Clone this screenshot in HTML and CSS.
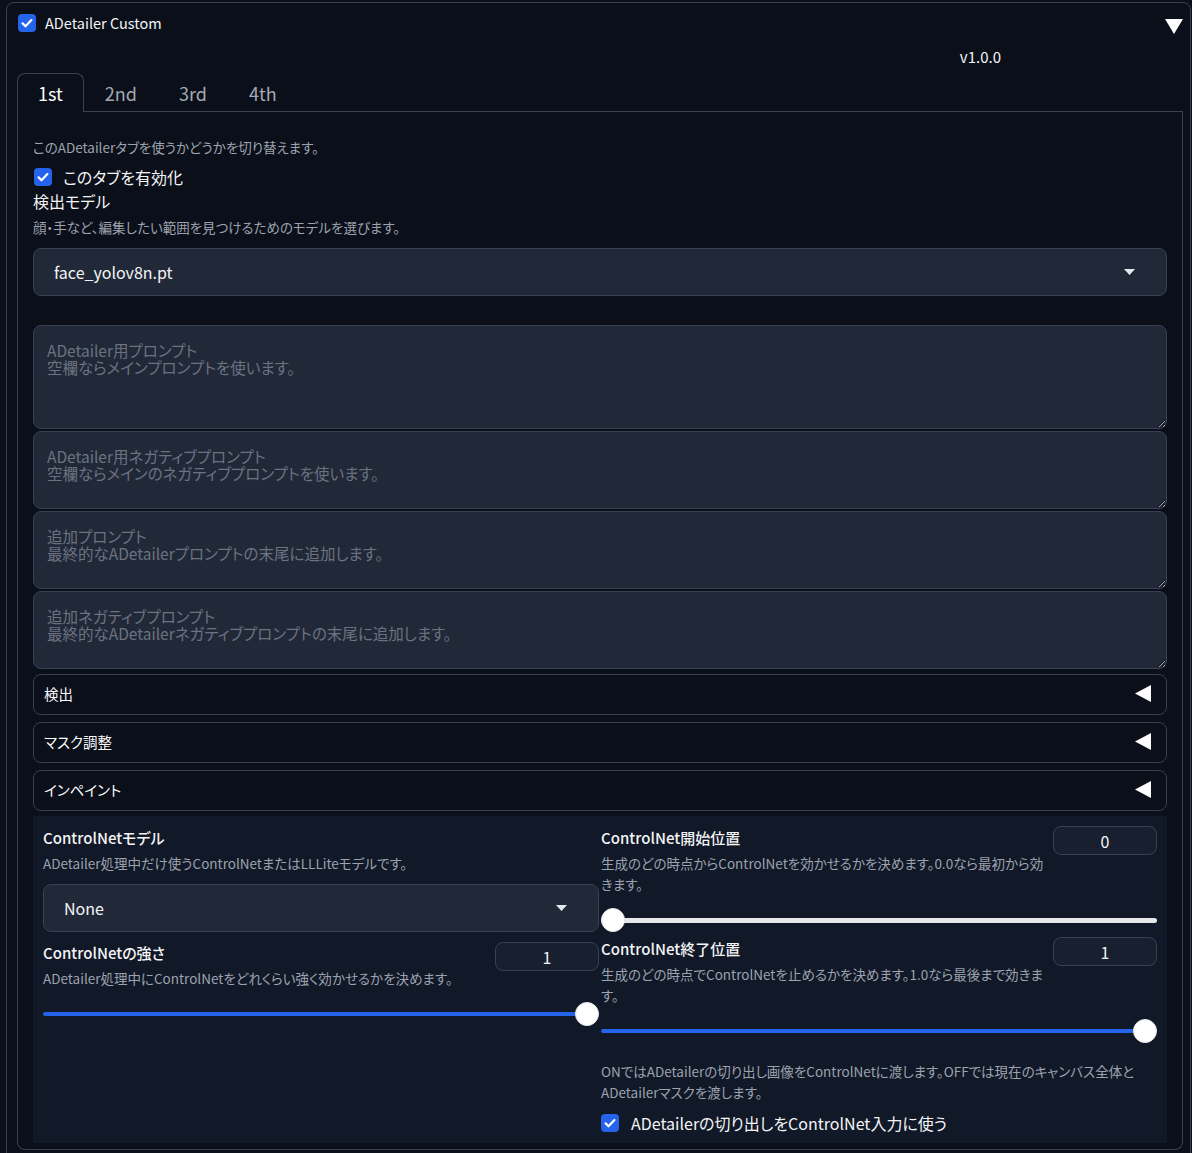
FILE: index.html
```html
<!DOCTYPE html>
<html lang="ja">
<head>
<meta charset="utf-8">
<title>ADetailer Custom</title>
<link rel="stylesheet" href="styles.css">
</head>
<body>
<div class="block">
  <div class="head">
    <label class="check-row head-check">
      <span class="cb"><svg viewBox="0 0 18 18" width="18" height="18"><path d="M4.6 9.4l2.9 2.9 5.9-6.2" fill="none" stroke="#fff" stroke-width="2.2" stroke-linecap="round" stroke-linejoin="round"/></svg></span>
      <span class="head-title">ADetailer Custom</span>
    </label>
    <svg class="tri-down" viewBox="0 0 18 15" width="18" height="15"><polygon points="0,0 18,0 9,15" fill="#fff"/></svg>
  </div>
  <div class="version-row"><span>v1.0.0</span></div>

  <div class="tabs">
    <div class="tab-nav">
      <button class="tab active">1st</button>
      <button class="tab">2nd</button>
      <button class="tab">3rd</button>
      <button class="tab">4th</button>
    </div>
    <div class="tab-panel">
      <p class="desc d-first">このADetailerタブを使うかどうかを切り替えます。</p>
      <label class="check-row enable">
        <span class="cb"><svg viewBox="0 0 18 18" width="18" height="18"><path d="M4.6 9.4l2.9 2.9 5.9-6.2" fill="none" stroke="#fff" stroke-width="2.2" stroke-linecap="round" stroke-linejoin="round"/></svg></span>
        <span class="enable-label">このタブを有効化</span>
      </label>
      <div class="title model-title">検出モデル</div>
      <p class="desc d-model">顔・手など、編集したい範囲を見つけるためのモデルを選びます。</p>
      <div class="select model-select">
        <span>face_yolov8n.pt</span>
        <svg class="caret" viewBox="0 0 11 6" width="11" height="6"><polygon points="0,0 11,0 5.5,6" fill="#e5e7eb"/></svg>
      </div>

      <textarea class="prompt tall" placeholder="ADetailer用プロンプト&#10;空欄ならメインプロンプトを使います。"></textarea>
      <textarea class="prompt" placeholder="ADetailer用ネガティブプロンプト&#10;空欄ならメインのネガティブプロンプトを使います。"></textarea>
      <textarea class="prompt" placeholder="追加プロンプト&#10;最終的なADetailerプロンプトの末尾に追加します。"></textarea>
      <textarea class="prompt" placeholder="追加ネガティブプロンプト&#10;最終的なADetailerネガティブプロンプトの末尾に追加します。"></textarea>

      <div class="acc first"><span>検出</span><svg viewBox="0 0 16 17" width="16" height="17"><polygon points="16,0 16,17 0,8.5" fill="#fff"/></svg></div>
      <div class="acc"><span>マスク調整</span><svg viewBox="0 0 16 17" width="16" height="17"><polygon points="16,0 16,17 0,8.5" fill="#fff"/></svg></div>
      <div class="acc"><span>インペイント</span><svg viewBox="0 0 16 17" width="16" height="17"><polygon points="16,0 16,17 0,8.5" fill="#fff"/></svg></div>

      <div class="cn">
        <div class="col">
          <div class="title cn-title">ControlNetモデル</div>
          <p class="desc cn-desc">ADetailer処理中だけ使うControlNetまたはLLLiteモデルです。</p>
          <div class="select cn-select">
            <span>None</span>
            <svg class="caret" viewBox="0 0 11 6" width="11" height="6"><polygon points="0,0 11,0 5.5,6" fill="#e5e7eb"/></svg>
          </div>
          <div class="slider-block strength">
            <div class="slider-head">
              <div class="slider-info">
                <div class="title">ControlNetの強さ</div>
                <p class="desc cn-desc">ADetailer処理中にControlNetをどれくらい強く効かせるかを決めます。</p>
              </div>
              <input class="num" type="text" value="1">
            </div>
            <input class="range full" type="range" min="0" max="1" step="0.01" value="1">
          </div>
        </div>

        <div class="col">
          <div class="slider-block">
            <div class="slider-head">
              <div class="slider-info">
                <div class="title">ControlNet開始位置</div>
                <p class="desc cn-desc wrap">生成のどの時点からControlNetを効かせるかを決めます。0.0なら最初から効きます。</p>
              </div>
              <input class="num" type="text" value="0">
            </div>
            <input class="range empty" type="range" min="0" max="1" step="0.01" value="0">
          </div>
          <div class="slider-block second">
            <div class="slider-head">
              <div class="slider-info">
                <div class="title">ControlNet終了位置</div>
                <p class="desc cn-desc wrap">生成のどの時点でControlNetを止めるかを決めます。1.0なら最後まで効きます。</p>
              </div>
              <input class="num" type="text" value="1">
            </div>
            <input class="range full" type="range" min="0" max="1" step="0.01" value="1">
          </div>
          <p class="desc cn-desc wrap crop-desc">ONではADetailerの切り出し画像をControlNetに渡します。OFFでは現在のキャンバス全体とADetailerマスクを渡します。</p>
          <label class="check-row crop-check">
            <span class="cb"><svg viewBox="0 0 18 18" width="18" height="18"><path d="M4.6 9.4l2.9 2.9 5.9-6.2" fill="none" stroke="#fff" stroke-width="2.2" stroke-linecap="round" stroke-linejoin="round"/></svg></span>
            <span class="crop-label">ADetailerの切り出しをControlNet入力に使う</span>
          </label>
        </div>
      </div>
    </div>
  </div>
</div>
</body>
</html>
```

FILE: styles.css
```css
* {
  box-sizing: border-box;
}

html, body {
  margin: 0;
  padding: 0;
  background: #0b0f19;
}

body {
  font-family: "Noto Sans CJK JP", "Noto Sans", sans-serif;
  font-feature-settings: "palt";
  color: #f3f4f6;
}

p {
  margin: 0;
}

.block {
  margin: 2px 1px 0 6px;
  border: 1px solid #374151;
  border-radius: 8px;
  padding: 11px 7px 12px 10px;
}

.head {
  display: flex;
  justify-content: space-between;
  align-items: flex-start;
  height: 18px;
}

.check-row {
  display: flex;
  align-items: center;
  height: 20px;
}

.head-check {
  height: 18px;
  margin-left: 1px;
}

.cb {
  display: inline-flex;
  width: 18px;
  height: 18px;
  flex: none;
  border-radius: 4px;
  background: #2563eb;
}

.cb svg {
  display: block;
}

.head-title {
  margin-left: 9px;
  font-size: 14.5px;
  line-height: 18px;
  color: #f3f4f6;
}

.tri-down {
  display: block;
  margin-top: 5px;
}

.version-row {
  display: flex;
  justify-content: flex-end;
  margin-top: 15px;
  padding-right: 182px;
  font-size: 15px;
  line-height: 20px;
  color: #f3f4f6;
}

.tabs {
  margin-top: 6px;
}

.tab-nav {
  display: flex;
  border-bottom: 1px solid #374151;
  height: 39px;
}

.tab {
  height: 39px;
  margin-bottom: -1px;
  padding: 0 20px 1px 20px;
  border: 1px solid transparent;
  border-bottom: none;
  background: transparent;
  font-family: inherit;
  font-size: 18px;
  line-height: 22px;
  color: #a3a9b4;
  cursor: pointer;
}

.tab.active {
  border-color: #374151;
  border-radius: 8px 8px 0 0;
  background: #0b0f19;
  color: #ffffff;
}

.tab-panel {
  display: flex;
  flex-direction: column;
  border: 1px solid #374151;
  border-top: none;
  border-radius: 0 0 8px 8px;
  padding: 25px 15px 6px 15px;
}

.desc {
  font-size: 13.5px;
  line-height: 20px;
  color: #9ca3af;
}

.enable {
  margin-top: 10px;
}

.enable .cb {
  margin-left: 1px;
}

.enable-label {
  margin-left: 11px;
  font-size: 16px;
  line-height: 20px;
  color: #f3f4f6;
}

.title {
  font-size: 15px;
  line-height: 22px;
  font-weight: 500;
  color: #f3f4f6;
}

.model-title {
  margin-top: 3px;
  font-size: 16px;
  font-weight: 400;
}

.d-model {
  margin-top: 5px;
}

.select {
  display: flex;
  align-items: center;
  justify-content: space-between;
  height: 48px;
  padding: 0 31px 0 20px;
  border: 1px solid #374151;
  border-radius: 8px;
  background: #212939;
  font-size: 16px;
  color: #f3f4f6;
}

.caret {
  display: block;
}

.model-select {
  margin-top: 11px;
}

.prompt {
  display: block;
  width: 100%;
  height: 78px;
  margin: 2px 0 0 0;
  padding: 16px 13px 0 13px;
  border: 1px solid #374151;
  border-radius: 8px;
  background: #212939;
  font-family: inherit;
  font-feature-settings: "palt";
  font-size: 15.5px;
  line-height: 17px;
  color: #f3f4f6;
  overflow: hidden;
  resize: vertical;
  outline: none;
}

.prompt::placeholder {
  color: #6b7280;
}

.prompt.tall {
  height: 104px;
  margin-top: 29px;
}

.acc {
  display: flex;
  align-items: center;
  justify-content: space-between;
  height: 41px;
  margin-top: 7px;
  padding: 0 15px 2px 10px;
  border: 1px solid #374151;
  border-radius: 8px;
  background: #0b0f19;
  font-size: 14.5px;
  color: #f9fafb;
}

.acc svg {
  display: block;
}

.acc.first {
  margin-top: 5px;
}

.cn {
  display: grid;
  grid-template-columns: 1fr 1fr;
  column-gap: 2px;
  margin-top: 5px;
  padding: 10px 10px 10px 10px;
  background: #111827;
}

.col {
  display: flex;
  flex-direction: column;
  min-width: 0;
}

.cn-title {
  margin-top: 1px;
}

.cn-desc {
  margin-top: 4px;
}

.cn-desc.wrap {
  line-height: 21px;
}

.cn-select {
  margin-top: 11px;
}

.strength {
  margin-top: 10px;
}

.slider-head {
  display: flex;
  align-items: flex-start;
  gap: 6px;
}

.slider-info {
  flex: 1;
  min-width: 0;
}

.slider-block .slider-info .title {
  margin-top: 1px;
}

.strength .slider-info .title {
  margin-top: 0;
}

.num {
  flex: none;
  width: 104px;
  height: 29px;
  border: 1px solid #374151;
  border-radius: 8px;
  background: #182030;
  font-family: inherit;
  font-size: 16px;
  font-weight: 400;
  text-align: center;
  color: #f3f4f6;
  outline: none;
}

.second {
  margin-top: 5px;
}

.range {
  -webkit-appearance: none;
  appearance: none;
  display: block;
  width: 100%;
  height: 24px;
  margin: 13px 0 0 0;
  background: transparent;
}

.strength .range {
  margin-top: 14px;
}

.range::-webkit-slider-runnable-track {
  height: 5px;
  border-radius: 3px;
  background: #e5e7eb;
}

.range.full::-webkit-slider-runnable-track {
  height: 4px;
  background: #2563eb;
}

.range::-webkit-slider-thumb {
  -webkit-appearance: none;
  appearance: none;
  width: 24px;
  height: 24px;
  margin-top: -10px;
  border: 1px solid #e5e7eb;
  border-radius: 50%;
  background: #ffffff;
}

.crop-desc {
  margin-top: 18px;
}

.crop-check {
  margin-top: 10px;
}

.crop-label {
  margin-left: 12px;
  font-size: 16px;
  line-height: 20px;
  color: #f3f4f6;
}
```
